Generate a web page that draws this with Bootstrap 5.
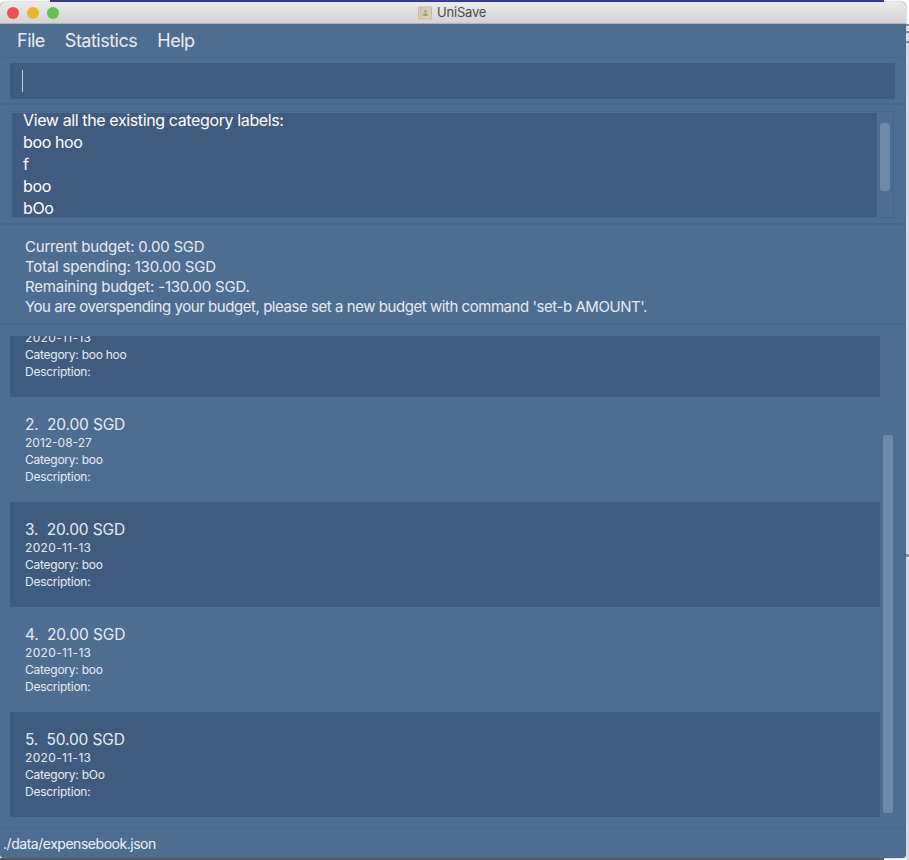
<!DOCTYPE html>
<html lang="en">
<head>
<meta charset="utf-8">
<title>UniSave</title>
<link href="https://cdn.jsdelivr.net/npm/bootstrap@5.3.0/dist/css/bootstrap.min.css" rel="stylesheet">
<style>
html, body { height: 860px; overflow: hidden; }
body { background: #fff; font-family: Inter, "Noto Sans", sans-serif; color: #e6ebf1; position: relative; }
.desk-strip { height: 2px; margin-left: 50px; margin-right: 25px; background: #3c3f9b; }
.desk-foot { height: 2px; margin-right: 25px; background: #5a5a5a; }
.desk-side { position: absolute; left: 906px; top: 24px; width: 3px; height: 836px; background: #dcdcdc; }
.desk-mark { position: absolute; left: 906px; width: 3px; background: #8c8c8c; }
.mark-a { top: 24px; height: 2px; }
.mark-b { top: 31px; height: 2px; }
.mark-c { top: 41px; height: 2px; }
.mark-d { top: 554px; height: 3px; }
.app-win { width: 906px; height: 856px; background: #4d6d91; border-radius: 5px 5px 4px 4px; overflow: hidden; box-shadow: 0 0 2px rgba(0,0,0,.45); }
.title-bar { height: 22px; background: linear-gradient(#ebebeb, #d3d3d3); border-bottom: 1px solid #b1b1b1; color: #4c4c4c; font-size: 13px; letter-spacing: -.2px; padding-left: 7px; }
.tl { width: 12px; height: 12px; border-radius: 50%; }
.tl-r { background: #e5554f; }
.tl-y { background: #e9b52f; }
.tl-g { background: #62c350; }
.title-mid { padding-left: 359px; gap: 5px; }
.menu-row { height: 34px; padding-left: 17px; gap: 20px; font-size: 18px; letter-spacing: -.5px; border-bottom: 1px solid #466789; color: #e9edf2; }
.cmd-sec { height: 47px; padding: 5px 11px 5px 10px; border-bottom: 2px solid #466789; }
.cmd-box { height: 36px; background: #3f5c7e; padding-left: 12px; }
.caret-bar { width: 1px; height: 22px; background: #c3ccd7; }
.res-sec { height: 120px; padding: 6px 12px 6px 10px; border-bottom: 2px solid #466789; }
.res-box { height: 107px; border: 1px solid #466789; padding: 1px 0 1px 1px; }
.res-text { width: 865px; height: 104px; background: #3f5c7e; padding-left: 11px; overflow: hidden; font-size: 16px; letter-spacing: -.38px; line-height: 22px; color: #fff; }
.res-inner { margin-top: -4px; }
.bar-a { width: 10px; height: 68px; margin: 10px 0 0 3px; background: #6e8aa8; border-radius: 3px; }
.bud-sec { height: 100px; padding: 12px 0 0 25px; font-size: 15px; letter-spacing: -.2px; line-height: 20px; border-bottom: 2px solid #466789; color: #e6ebf1; white-space: nowrap; }
.bud-long { letter-spacing: -.45px; }
.list-sec { height: 503px; padding: 11px 13px 10px 10px; border-bottom: 1px solid #466789; }
.list-clip { width: 870px; height: 481px; overflow: hidden; }
.list-inner { margin-top: -44px; }
.exp-row { height: 105px; padding: 19px 0 0 15px; font-size: 12px; letter-spacing: -.25px; line-height: 17px; color: #e6ebf1; }
.exp-row:nth-child(odd) { background: #3f5c7e; }
.exp-head { font-size: 15.5px; letter-spacing: -.155px; line-height: 18px; }
.exp-date { letter-spacing: .35px; }
.exp-date-b { letter-spacing: 0; }
.bar-b-wrap { width: 10px; margin-left: 3px; padding-top: 99px; }
.bar-b { width: 10px; height: 378px; background: #6e8aa8; border-radius: 3px; }
.stat-row { padding: 6px 0 0 3px; font-size: 14px; letter-spacing: -.47px; line-height: 20px; color: #eef1f5; }
</style>
</head>
<body>
<div class="desk-side"></div>
<div class="desk-mark mark-a"></div><div class="desk-mark mark-b"></div><div class="desk-mark mark-c"></div><div class="desk-mark mark-d"></div>
<div class="desk-strip"></div>
<div class="app-win d-flex flex-column">
  <div class="title-bar d-flex align-items-center flex-shrink-0">
    <div class="d-flex gap-2"><span class="tl tl-r"></span><span class="tl tl-y"></span><span class="tl tl-g"></span></div>
    <div class="title-mid d-flex align-items-center">
      <svg width="14" height="14" viewBox="0 0 14 14"><rect x="0.5" y="1" width="13" height="12" fill="#d6cfb4" stroke="#c4bda3"/><rect x="2.5" y="1" width="1" height="12" fill="#c4bda3"/><path d="M7.5 4a1.3 1.3 0 1 1 0 2.6a1.3 1.3 0 1 1 0-2.6zM5 10c.3-2 1.3-3 2.5-3s2.200 1 2.500 3z" fill="#a59d7e"/></svg>
      <span>UniSave</span>
    </div>
  </div>
  <div class="menu-row d-flex align-items-center flex-shrink-0">
    <span>File</span><span>Statistics</span><span>Help</span>
  </div>
  <div class="cmd-sec flex-shrink-0">
    <div class="cmd-box d-flex align-items-center"><span class="caret-bar"></span></div>
  </div>
  <div class="res-sec flex-shrink-0">
    <div class="res-box d-flex">
      <div class="res-text"><div class="res-inner">View all the existing category labels:<br>boo hoo<br>f<br>boo<br>bOo</div></div>
      <div class="bar-a"></div>
    </div>
  </div>
  <div class="bud-sec flex-shrink-0">
    <div>Current budget: 0.00 SGD</div>
    <div>Total spending: 130.00 SGD</div>
    <div>Remaining budget: -130.00 SGD.</div>
    <div class="bud-long">You are overspending your budget, please set a new budget with command 'set-b AMOUNT'.</div>
  </div>
  <div class="list-sec d-flex flex-shrink-0">
    <div class="list-clip">
      <div class="list-inner">
        <div class="exp-row"><div class="exp-head">1.&nbsp; 20.00 SGD</div><div class="exp-date">2020-11-13</div><div>Category: boo hoo</div><div>Description:</div></div>
        <div class="exp-row"><div class="exp-head">2.&nbsp; 20.00 SGD</div><div class="exp-date exp-date-b">2012-08-27</div><div>Category: boo</div><div>Description:</div></div>
        <div class="exp-row"><div class="exp-head">3.&nbsp; 20.00 SGD</div><div class="exp-date">2020-11-13</div><div>Category: boo</div><div>Description:</div></div>
        <div class="exp-row"><div class="exp-head">4.&nbsp; 20.00 SGD</div><div class="exp-date">2020-11-13</div><div>Category: boo</div><div>Description:</div></div>
        <div class="exp-row"><div class="exp-head">5.&nbsp; 50.00 SGD</div><div class="exp-date">2020-11-13</div><div>Category: bOo</div><div>Description:</div></div>
      </div>
    </div>
    <div class="bar-b-wrap"><div class="bar-b"></div></div>
  </div>
  <div class="stat-row">./data/expensebook.json</div>
</div>
<div class="desk-foot"></div>
<script src="https://cdn.jsdelivr.net/npm/bootstrap@5.3.0/dist/js/bootstrap.bundle.min.js"></script>
</body>
</html>
